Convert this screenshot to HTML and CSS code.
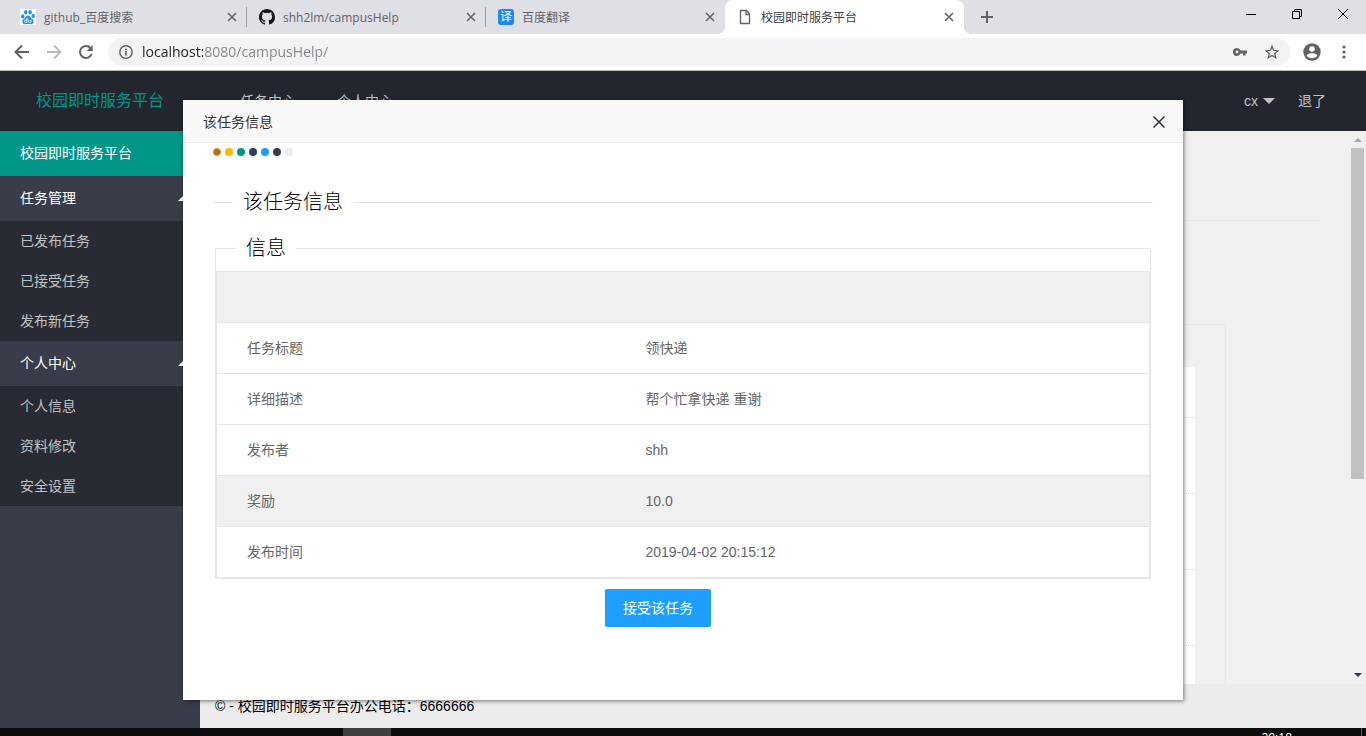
FILE: index.html
```html
<!DOCTYPE html>
<html lang="zh-CN">
<head>
<meta charset="utf-8">
<title>校园即时服务平台</title>
<link rel="stylesheet" href="styles.css">
</head>
<body>
<div class="tabstrip">
  <div class="tabs">
    <div class="tab">
      <svg class="favicon" viewBox="0 0 16 16"><rect width="16" height="16" fill="#fff"/><g fill="#2490f5"><ellipse cx="2.8" cy="7.4" rx="1.7" ry="2.2"/><ellipse cx="5.7" cy="3.2" rx="1.7" ry="2.3"/><ellipse cx="10.1" cy="3.2" rx="1.7" ry="2.3"/><ellipse cx="13.2" cy="6.9" rx="1.7" ry="2.2"/><path d="M8 6.5c1.7 0 2.300 1.600 3.500 2.700 1.300 1.100 2.300 2 2.200 3.600-.1 1.700-1.500 2.700-3.200 2.400-1.600-.3-3.400-.3-5 0-1.800.3-3.200-.7-3.200-2.400 0-1.600 1-2.400 2.200-3.500C5.700 8.200 6.300 6.500 8 6.500z"/></g><path d="M7 9v4.500H5.600c-1.400 0-1.400-2.500 0-2.500H7M8.700 10.700v2.200c0 .7 2.300.8 2.300 0v-2.200" fill="none" stroke="#fff" stroke-width=".9"/></svg>
      <span class="tab-title">github_百度搜索</span>
      <button class="tab-close" aria-label="关闭"><svg viewBox="0 0 10 10"><path d="M1 1l8 8M9 1L1 9"/></svg></button>
    </div>
    <div class="tab">
      <svg class="favicon" viewBox="0 0 16 16"><path fill="#191717" d="M8 0C3.580 0 0 3.580 0 8c0 3.540 2.290 6.530 5.470 7.590.4.070.55-.17.55-.38 0-.19-.01-.82-.01-1.490-2.010.37-2.530-.49-2.690-.94-.09-.23-.48-.94-.82-1.130-.28-.15-.68-.52-.01-.53.63-.01 1.080.58 1.230.82.72 1.210 1.870.87 2.330.66.07-.52.28-.87.51-1.070-1.780-.2-3.640-.89-3.640-3.950 0-.87.31-1.590.82-2.150-.08-.2-.36-1.020.08-2.120 0 0 .67-.21 2.200.82a7.600 7.600 0 0 1 4 0c1.530-1.040 2.200-.82 2.200-.82.44 1.100.16 1.920.08 2.120.51.56.82 1.270.82 2.150 0 3.070-1.870 3.750-3.650 3.950.29.25.54.73.54 1.480 0 1.070-.01 1.930-.01 2.200 0 .21.15.46.55.38A8.010 8.010 0 0 0 16 8c0-4.420-3.580-8-8-8z"/></svg>
      <span class="tab-title">shh2lm/campusHelp</span>
      <button class="tab-close" aria-label="关闭"><svg viewBox="0 0 10 10"><path d="M1 1l8 8M9 1L1 9"/></svg></button>
    </div>
    <div class="tab tab-last">
      <span class="favicon favicon-fanyi">译</span>
      <span class="tab-title">百度翻译</span>
      <button class="tab-close" aria-label="关闭"><svg viewBox="0 0 10 10"><path d="M1 1l8 8M9 1L1 9"/></svg></button>
    </div>
    <div class="tab tab-active">
      <svg class="favicon" viewBox="0 0 16 16"><path d="M3.500 1.500h6l3 3.500v9.500h-9zM9 1.500V5.500h3.500" fill="none" stroke="#5f6368" stroke-width="1.300"/></svg>
      <span class="tab-title">校园即时服务平台</span>
      <button class="tab-close" aria-label="关闭"><svg viewBox="0 0 10 10"><path d="M1 1l8 8M9 1L1 9"/></svg></button>
    </div>
  </div>
  <button class="new-tab" aria-label="新标签页"><svg viewBox="0 0 12 12"><path d="M6 0v12M0 6h12"/></svg></button>
  <div class="window-buttons">
    <button aria-label="最小化"><svg viewBox="0 0 12 12"><path d="M1 6.500h10"/></svg></button>
    <button aria-label="还原"><svg viewBox="0 0 12 12"><path d="M1.500 3.500h7v7h-7zM3.500 3.500v-2h7v7h-2"/></svg></button>
    <button aria-label="关闭窗口"><svg viewBox="0 0 12 12"><path d="M1 1l10 10M11 1L1 11"/></svg></button>
  </div>
</div>

<div class="toolbar">
  <button class="tool" aria-label="后退"><svg viewBox="0 0 16 16"><path d="M15 8H2M8 1.500L1.500 8 8 14.500" stroke="#5f6368"/></svg></button>
  <button class="tool" aria-label="前进"><svg viewBox="0 0 16 16"><path d="M1 8h13M8 1.500L14.500 8 8 14.500" stroke="#babcbe"/></svg></button>
  <button class="tool" aria-label="刷新"><svg viewBox="0 0 16 16"><path d="M13.600 10.200A6 6 0 1 1 12.500 4" stroke="#5f6368"/><path d="M14.700 1v6h-6z" fill="#5f6368" stroke="none"/></svg></button>
  <div class="omnibox">
    <svg class="info" viewBox="0 0 14 14"><circle cx="7" cy="7" r="6.200" fill="none" stroke="#5f6368" stroke-width="1.400"/><path d="M7 6v4.500M7 3.500v1.500" stroke="#5f6368" stroke-width="1.600"/></svg>
    <input class="url" type="text" aria-label="地址" value="localhost:8080/campusHelp/">
    <button class="omni-btn" aria-label="密码"><svg viewBox="0 0 14 14"><path fill="#5f6368" fill-rule="evenodd" d="M7.600 5.500A4 4 0 1 0 7.600 8.500H10v2h2.500v-2H14v-3zM4 5.600a1.400 1.400 0 1 1 0 2.800 1.400 1.400 0 0 1 0-2.800z"/></svg></button>
    <button class="omni-btn" aria-label="收藏"><svg viewBox="0 0 14 14"><path d="M7 1.300l1.700 4 4.300.4-3.300 2.800 1 4.200L7 10.500l-3.700 2.200 1-4.200L1 5.700l4.300-.4z" fill="none" stroke="#5f6368" stroke-width="1.300"/></svg></button>
  </div>
  <button class="avatar" aria-label="用户"><svg viewBox="0 0 18 18"><circle cx="9" cy="9" r="8.700" fill="#5f6368"/><circle cx="9" cy="6" r="2.800" fill="#fff"/><path d="M3.600 12.500C4.500 10.900 7 10.300 9 10.300s4.500.6 5.400 2.200C13.200 14.300 11.200 15.300 9 15.300s-4.200-1-5.400-2.800z" fill="#fff"/></svg></button>
  <button class="menu" aria-label="菜单"><svg viewBox="0 0 4 14"><g fill="#5f6368"><circle cx="2" cy="2" r="1.600"/><circle cx="2" cy="7" r="1.600"/><circle cx="2" cy="12" r="1.600"/></g></svg></button>
</div>

<div class="page">
  <header class="header">
    <div class="logo">校园即时服务平台</div>
    <nav class="top-nav"><a href="#">任务中心</a><a href="#">个人中心</a></nav>
    <nav class="user-nav"><a href="#">cx<i class="caret-down"></i></a><a href="#">退了</a></nav>
  </header>
  <div class="body">
    <nav class="side">
      <a class="side-head side-current" href="#">校园即时服务平台</a>
      <a class="side-head" href="#">任务管理<i class="caret-up"></i></a>
      <div class="side-sub">
        <a href="#">已发布任务</a><a href="#">已接受任务</a><a href="#">发布新任务</a>
      </div>
      <a class="side-head" href="#">个人中心<i class="caret-up"></i></a>
      <div class="side-sub">
        <a href="#">个人信息</a><a href="#">资料修改</a><a href="#">安全设置</a>
      </div>
    </nav>
    <div class="right">
      <div class="viewport">
        <main class="content">
          <hr class="rule">
          <div class="frame">
            <div class="list">
              <div class="list-head"></div>
              <div class="list-row"></div>
              <div class="list-row"></div>
              <div class="list-row"></div>
            </div>
          </div>
        </main>
        <div class="scrollbar"><i class="arrow-up"></i><i class="thumb"></i><i class="arrow-down"></i></div>
      </div>
      <footer class="footer">© - 校园即时服务平台办公电话<span class="colon">：</span>6666666</footer>
    </div>
  </div>

  <div class="layer">
    <section class="dialog" role="dialog" aria-labelledby="dialog-title">
      <div class="dialog-head">
        <span id="dialog-title">该任务信息</span>
        <button class="dialog-close" aria-label="关闭"><svg viewBox="0 0 12 12"><path d="M.5.5l11 11M11.500.5l-11 11"/></svg></button>
      </div>
      <div class="dialog-body">
        <div class="dots">
          <i class="dot dot-orange"></i><i class="dot dot-yellow"></i><i class="dot dot-green"></i><i class="dot dot-cyan"></i><i class="dot dot-blue"></i><i class="dot dot-black"></i><i class="dot dot-gray"></i>
        </div>
        <h2 class="title-line">该任务信息</h2>
        <fieldset class="info-box">
          <legend>信息</legend>
          <table class="info-table">
            <tbody>
              <tr class="shaded"><td></td><td></td></tr>
              <tr><td>任务标题</td><td>领快递</td></tr>
              <tr><td>详细描述</td><td>帮个忙拿快递 重谢</td></tr>
              <tr><td>发布者</td><td>shh</td></tr>
              <tr class="shaded"><td>奖励</td><td>10.0</td></tr>
              <tr><td>发布时间</td><td>2019-04-02 20:15:12</td></tr>
            </tbody>
          </table>
        </fieldset>
        <button class="accept">接受该任务</button>
      </div>
    </section>
  </div>
</div>
<div class="taskbar"><span class="task"></span><span class="clock">20:18</span><span class="peek"></span></div>
</body>
</html>
```
FILE: styles.css
```css
* { box-sizing: border-box; }
html, body { height: 100%; }
body {
  margin: 0;
  display: flex;
  flex-direction: column;
  overflow: hidden;
  font: 14px/24px "Liberation Sans", "Noto Sans CJK SC", sans-serif;
  color: #000;
}
a { color: inherit; text-decoration: none; }
button { border: 0; padding: 0; margin: 0; background: none; font: inherit; color: inherit; }
svg { display: block; }

/* Tab strip */
.tabstrip {
  display: flex;
  flex: none;
  height: 34px;
  background: #dfe0e6;
  font: 12px/18px "Open Sans", "Noto Sans CJK SC", sans-serif;
  color: #5f6368;
}
.tabs { display: flex; flex: 0 1 956px; margin-left: 8px; min-width: 0; }
.tab {
  display: flex;
  align-items: center;
  flex: 1 1 0;
  min-width: 0;
  padding: 0 10px 0 12px;
  position: relative;
}
.tab:not(.tab-last):not(.tab-active)::after {
  content: "";
  position: absolute;
  right: 0;
  top: 7px;
  width: 1px;
  height: 20px;
  background: #9aa0a6;
}
.favicon { width: 16px; height: 16px; flex: none; margin-right: 8px; }
.favicon-fanyi {
  border-radius: 3px;
  background: #1e88fa;
  color: #fff;
  font-size: 12px;
  line-height: 16px;
  text-align: center;
}
.tab-title { flex: 1; padding-top: 1px; white-space: nowrap; overflow: hidden; }
.tab-close { width: 10px; height: 10px; }
.tab-close svg { width: 10px; height: 10px; fill: none; stroke: #5f6368; stroke-width: 1.5; }
.tab-active { background: #fff; border-radius: 8px 8px 0 0; color: #3c4043; }
.tab-active::before, .tab-active::after {
  content: "";
  position: absolute;
  bottom: 0;
  width: 8px;
  height: 8px;
}
.tab-active::before { left: -8px; background: radial-gradient(circle at 0 0, transparent 8px, #fff 8px); }
.tab-active::after { right: -8px; background: radial-gradient(circle at 100% 0, transparent 8px, #fff 8px); }
.new-tab { width: 46px; display: grid; place-items: center; }
.new-tab svg { width: 12px; height: 12px; fill: none; stroke: #5f6368; stroke-width: 2; }
.window-buttons { display: flex; margin-left: auto; height: 28px; }
.window-buttons button { width: 46px; display: grid; place-items: center; }
.window-buttons svg { width: 12px; height: 12px; fill: none; stroke: #000; stroke-width: 1; }

/* Toolbar */
.toolbar {
  display: flex;
  align-items: center;
  flex: none;
  height: 37px;
  padding: 0 10px 0 6px;
  background: #fff;
  border-bottom: 1px solid #b5b8b8;
}
.tool { width: 32px; height: 32px; display: grid; place-items: center; }
.tool svg { width: 16px; height: 16px; fill: none; stroke-width: 2; }
.omnibox {
  display: flex;
  align-items: center;
  flex: 1;
  height: 28px;
  margin: 0 10px 0 6px;
  padding: 0 2px 0 11px;
  border-radius: 14px;
  background: #f1f3f4;
}
.info { width: 14px; height: 14px; flex: none; }
.url {
  flex: 1;
  min-width: 0;
  border: 0;
  padding: 0;
  margin: 0 9px;
  height: 24px;
  outline: 0;
  font: 14px/24px "Open Sans", "Noto Sans CJK SC", sans-serif;
  color: transparent;
  background: linear-gradient(90deg, #202124 61px, #80868b 61px);
  background-clip: text;
  -webkit-background-clip: text;
}
.omni-btn { width: 32px; height: 28px; display: grid; place-items: center; }
.omni-btn svg { width: 14px; height: 14px; }
.avatar { width: 24px; display: grid; place-items: center; }
.avatar svg { width: 18px; height: 18px; }
.menu { width: 24px; margin-left: 8px; display: grid; place-items: center; }
.menu svg { width: 4px; height: 14px; }

/* Page */
.page { position: relative; flex: 1; min-height: 0; display: flex; flex-direction: column; }
.header {
  display: flex;
  align-items: center;
  flex: none;
  height: 60px;
  background: #23262e;
  color: #c2c2c2;
}
.logo { width: 200px; text-align: center; font-size: 16px; color: #009688; }
.top-nav { display: flex; gap: 41px; padding-left: 40px; }
.user-nav { display: flex; gap: 23px; margin-left: auto; padding-right: 40px; }
.user-nav a { display: flex; align-items: center; }
.caret-down { margin-left: 5px; border: 6px solid transparent; border-top-color: #c2c2c2; border-bottom-width: 0; }

.body { display: flex; flex: 1; min-height: 0; }
.side { width: 200px; flex: none; background: #393d49; color: #c2c2c2; }
.side-head {
  display: flex;
  align-items: center;
  justify-content: space-between;
  height: 45px;
  padding: 0 10px 1px 20px;
  color: #fff;
}
.side-current { background: #009688; }
.caret-up { border: 6px solid transparent; border-bottom-color: #fff; border-top-width: 0; }
.side-sub { background: #282b33; }
.side-sub a { display: block; padding-left: 20px; line-height: 40px; }

.right { flex: 1; min-width: 0; display: flex; flex-direction: column; background: #f0f0f0; }
.viewport { flex: 1; min-height: 0; display: flex; }
.content {
  flex: 1;
  min-width: 0;
  display: flex;
  flex-direction: column;
  padding: 89px 29px 0 15px;
  overflow: hidden;
}
.rule { width: 100%; flex: none; margin: 0 0 103px; border: 0; border-top: 1px solid #e6e6e6; }
.frame {
  flex: 1;
  min-height: 0;
  margin-right: 94px;
  padding: 42px 30px 0;
  border: 1px solid #e6e6e6;
  border-bottom: 0;
}
.list { height: 100%; background: #fff; border-radius: 2px 2px 0 0; overflow: hidden; }
.list-head, .list-row { height: 76px; border-bottom: 1px dotted #ddd; }
.list-head { height: 51px; }
.scrollbar {
  width: 17px;
  flex: none;
  display: flex;
  flex-direction: column;
  align-items: center;
  padding: 7px 0;
}
.arrow-up { border: 4px solid transparent; border-bottom-color: #9aa5b5; border-top-width: 0; }
.arrow-down { margin-top: auto; border: 4px solid transparent; border-top-color: #2b3a5a; border-bottom-width: 0; }
.thumb { width: 13px; height: 331px; margin-top: 6px; background: #c1c1c1; }
.footer { flex: none; height: 44px; padding-left: 15px; line-height: 44px; background: #ececec; }
.colon { font-family: "Noto Sans CJK TC", sans-serif; line-height: 1; }

/* Dialog */
.layer {
  position: absolute;
  inset: 0;
  display: flex;
  justify-content: center;
  align-items: flex-start;
  padding-top: 29px;
}
.dialog {
  width: 1000px;
  max-width: 100%;
  min-height: 600px;
  background: #fff;
  box-shadow: 1px 1px 4px rgba(0, 0, 0, .5);
}
.dialog-head {
  display: flex;
  align-items: center;
  justify-content: space-between;
  height: 43px;
  padding: 1px 18px 0 20px;
  background: #f8f8f8;
  border-bottom: 1px solid #eee;
  color: #333;
}
.dialog-close svg { width: 12px; height: 12px; fill: none; stroke: #2d3344; stroke-width: 1.5; }
.dialog-body { display: flex; flex-direction: column; padding: 5px 30px 0; }
.dots { display: flex; gap: 4px; }
.dot { width: 8px; height: 8px; border-radius: 50%; }
.dot-orange { background: #b86a14; border: 1px solid #d8921a; }
.dot-yellow { background: #ffb800; }
.dot-green { background: #009688; }
.dot-cyan { background: #2f4056; }
.dot-blue { background: #1e9fff; }
.dot-black { background: #393d49; }
.dot-gray { background: #eee; }
.title-line {
  display: flex;
  align-items: center;
  gap: 10px;
  margin: 34px 0 0;
  font-size: 20px;
  font-weight: 300;
  line-height: 24px;
}
.title-line::before, .title-line::after { content: ""; height: 1px; background: #e6e6e6; }
.title-line::before { width: 20px; }
.title-line::after { flex: 1; }
.info-box {
  min-width: 0;
  margin: 22px 2px 0;
  padding: 11px 0 0;
  border: 1px solid #e6e6e6;
}
.info-box legend { margin-left: 20px; padding: 0 10px; font-size: 20px; font-weight: 300; line-height: 24px; }
.info-table { width: 100%; border-collapse: collapse; table-layout: fixed; border: 1px solid #e6e6e6; color: #666; }
.info-table td { height: 51px; padding: 0 30px; border-bottom: 1px solid #e6e6e6; line-height: 20px; }
.info-table td:first-child { width: 399px; }
.shaded { background: #f0f0f0; }
.accept {
  align-self: flex-start;
  height: 38px;
  margin: 10px 0 0 392px;
  padding: 0 18px;
  border-radius: 2px;
  background: #1e9fff;
  color: #fff;
}

/* Taskbar */
.taskbar { display: flex; flex: none; height: 8px; overflow: hidden; background: #0c0c0c; color: #fff; }
.task { width: 48px; margin-left: 343px; background: #3e3f40; }
.clock { margin-left: auto; padding-top: 3px; font: 12px/14px "Open Sans", sans-serif; }
.peek { width: 1px; margin: 0 4px 0 69px; background: #555; }
```
